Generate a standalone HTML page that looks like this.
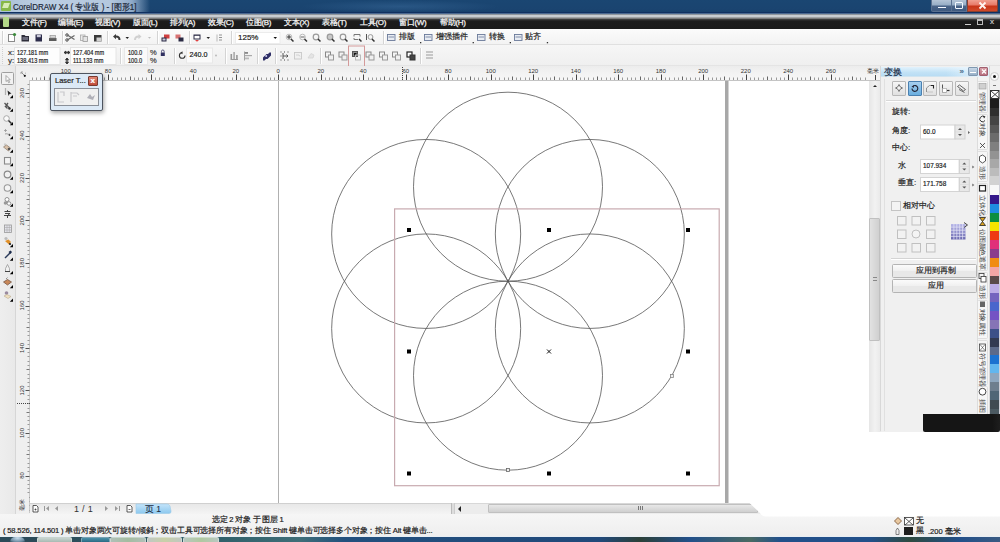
<!DOCTYPE html><html><head><meta charset="utf-8"><style>
*{margin:0;padding:0;box-sizing:border-box}
html,body{width:1000px;height:542px;overflow:hidden;background:#f0f0f0;font-family:"Liberation Sans",sans-serif;font-size:8px;color:#222}
div,span{position:absolute}
.t{white-space:nowrap;line-height:10px;-webkit-text-stroke:0.2px currentColor}
.mi{top:17.7px;color:#f4f4f4;font-size:8px;line-height:10px;white-space:nowrap;letter-spacing:-0.3px;-webkit-text-stroke:0.25px currentColor}
.sep{width:1px;background:#d4d4d4;box-shadow:1px 0 0 #fff}
.fld{background:#fff;border:1px solid #e2e2e2}
</style></head><body>
<div style="left:0;top:0;width:1000px;height:13px;background:linear-gradient(180deg,#1a4672,#1a4470 70%,#163e6a)"></div>
<div style="left:0;top:0;width:160px;height:13px;background:linear-gradient(90deg,#a9bfd6 0,#bccfe3 40px,#b4c8de 110px,#8faac8 132px,rgba(30,70,120,0) 150px)"></div>
<div style="left:300px;top:0;width:200px;height:13px;background:radial-gradient(ellipse at center,rgba(70,120,170,.35),rgba(0,0,0,0) 70%)"></div>
<div style="left:0;top:11.5px;width:1000px;height:2px;background:linear-gradient(180deg,#103060 0,#103060 .5px,#4a6890 1px,#4a6890 2px)"></div>
<div style="left:1px;top:1px;width:10px;height:10px;background:#86b848;border-radius:1px"></div>
<div style="left:3px;top:3px;width:6px;height:5px;background:#d8ecb8;transform:skewX(-20deg)"></div>
<div class="t" style="left:13px;top:1.6px;font-size:9px;color:#1c2838;transform:scaleX(.89);transform-origin:0 0">CorelDRAW X4 ( 专业版 ) - [图形1]</div>
<div style="left:931px;top:0;width:20.5px;height:11.5px;background:linear-gradient(180deg,#b4c4d6 0,#98aec6 45%,#4a6488 55%,#3e5a80 100%);border:1px solid #5a7090;border-top:none;border-radius:0 0 0 2px"></div>
<div style="left:951px;top:0;width:16px;height:11.5px;background:linear-gradient(180deg,#b4c4d6 0,#98aec6 45%,#4a6488 55%,#3e5a80 100%);border:1px solid #5a7090;border-top:none"></div>
<div style="left:967px;top:0;width:31px;height:11.5px;background:linear-gradient(180deg,#f0a090 0,#e87a68 45%,#c83418 55%,#d04a2a 100%);border:1px solid #8a4030;border-top:none;border-radius:0 0 2px 0"></div>
<div style="left:937.5px;top:6.5px;width:8px;height:1.8px;background:#f4f8ff"></div>
<div style="left:954.5px;top:2px;width:8px;height:7px;border:1.5px solid #f4f8ff;border-radius:1px"></div>
<svg style="position:absolute;left:967px;top:0" width="31" height="12"><path d="M12.5 2.5l6 6M18.5 2.5l-6 6" stroke="#fff4f0" stroke-width="1.8"/></svg>
<div style="left:0;top:13.5px;width:1000px;height:15.5px;background:linear-gradient(180deg,#303a48 0,#c8ccd0 .8px,#c8ccd0 2.5px,#7a7a7a 4.5px,#3a3a3a 5.5px,#1c1c1c 7px,#1a1a1a 14.5px,#000 15px,#000 15.5px)"></div>
<div style="left:3px;top:17px;width:6px;height:10px;background:#b4d888;border-radius:1px"></div>
<div class="mi" style="left:22px">文件(F)</div>
<div class="mi" style="left:58px">编辑(E)</div>
<div class="mi" style="left:95px">视图(V)</div>
<div class="mi" style="left:133px">版面(L)</div>
<div class="mi" style="left:170px">排列(A)</div>
<div class="mi" style="left:208px">效果(C)</div>
<div class="mi" style="left:246px">位图(B)</div>
<div class="mi" style="left:284px">文本(X)</div>
<div class="mi" style="left:322px">表格(T)</div>
<div class="mi" style="left:360px">工具(O)</div>
<div class="mi" style="left:399px">窗口(W)</div>
<div class="mi" style="left:440px">帮助(H)</div>
<div style="left:965px;top:24px;width:6px;height:1px;background:#ccc"></div>
<div style="left:977px;top:19px;width:6px;height:6px;border:1px solid #bbb;border-top-width:2px"></div>
<div class="t" style="left:990px;top:17px;color:#ccc;font-size:8px">x</div>
<div style="left:0;top:29px;width:1000px;height:16px;background:linear-gradient(180deg,#fbfbfb,#f3f3f3);border-bottom:1px solid #e0e0e0"></div>
<div style="left:0;top:45px;width:1000px;height:21px;background:linear-gradient(180deg,#f6f6f6,#efefef)"></div>
<div style="left:0;top:65px;width:1000px;height:1px;background:#e4e4e4"></div>
<div class="sep" style="left:2px;top:31px;height:13px"></div>
<div class="sep" style="left:61.5px;top:31px;height:13px"></div>
<div class="sep" style="left:107px;top:31px;height:13px"></div>
<div class="sep" style="left:156.5px;top:31px;height:13px"></div>
<div class="sep" style="left:189px;top:31px;height:13px"></div>
<div class="sep" style="left:231px;top:31px;height:13px"></div>
<div class="sep" style="left:382.5px;top:31px;height:13px"></div>
<svg style="position:absolute;left:0;top:0" width="1000" height="70" viewBox="0 0 1000 70"><rect x="8.5" y="34.5" width="6" height="7" fill="#fff" stroke="#8a8a8a"/><circle cx="14.5" cy="34.5" r="1.6" fill="#3a8a3a"/><path d="M21.5 35h3l1 1h3.5v5.5h-7.5z" fill="#2e2e3a"/><rect x="22.5" y="37" width="5.5" height="3" fill="#6a6a7a"/><rect x="35.5" y="34.5" width="6.5" height="7" fill="#2c2c4a"/><rect x="36.8" y="35" width="4" height="2.2" fill="#c8c8d8"/><rect x="49" y="38" width="7.5" height="3" fill="#5a5a5a"/><rect x="50" y="35.5" width="5.5" height="2.5" fill="#d8d8d8" stroke="#888" stroke-width=".6"/><path d="M66.5 34.5l8 5M66.5 40.5l8-5" stroke="#666" stroke-width="1.2"/><circle cx="67" cy="35" r="1.3" fill="none" stroke="#666"/><circle cx="67" cy="40" r="1.3" fill="none" stroke="#666"/><rect x="80.5" y="35" width="4.5" height="5.5" fill="#ececec" stroke="#aaa" stroke-width=".8"/><rect x="83" y="36.5" width="4.5" height="5" fill="#e4e4e4" stroke="#999" stroke-width=".8"/><rect x="94" y="35" width="7.5" height="6.5" fill="#3a3a3a"/><rect x="96.5" y="37.5" width="5" height="4" fill="#d0d0d0"/><path d="M113 36.5l3-2.5v1.6c3 0 4.5 1.8 4.5 4.4h-2c0-1.6-1-2.4-2.5-2.4v1.6z" fill="#3a3a3a"/><path d="M125.5 37h3.5l-1.75 2z" fill="#222"/><path d="M141.5 36.5l-3-2.5v1.6c-3 0-4.5 1.8-4.5 4.4h2c0-1.6 1-2.4 2.5-2.4v1.6z" fill="#d0d0d0"/><path d="M148 37h3l-1.5 1.8z" fill="#bbb"/><rect x="164" y="34.5" width="5.5" height="4" fill="#d04040"/><rect x="161.5" y="37.5" width="5" height="4" fill="#2a2a44"/><rect x="162.5" y="38.5" width="3" height="2" fill="#c8c8d8"/><rect x="175.5" y="34.5" width="5" height="4" fill="#d05050" opacity=".8"/><rect x="178.5" y="37.5" width="5" height="4" fill="#2a2a44"/><rect x="193.5" y="34.5" width="7" height="5" fill="#2a2a44"/><rect x="194.5" y="35.8" width="5" height="2.7" fill="#fff"/><path d="M195 40h4l-2 1.8z" fill="#e04040"/><path d="M206.5 37h3.5l-1.75 2z" fill="#222"/><path d="M217 34.5v7" stroke="#aaa" stroke-width=".8"/><path d="M219 35h3M219 37.5h3M219 40h3" stroke="#888" stroke-width=".9"/><rect x="235.5" y="32.5" width="44.5" height="11" fill="#fff" stroke="#ececec"/><path d="M273.5 37h3.5l-1.75 2z" fill="#111"/><circle cx="289" cy="37" r="2.8" fill="none" stroke="#bbb" stroke-width="1"/><path d="M287 37h4M289 35v4" stroke="#333" stroke-width="1"/><path d="M291 39l2.5 2.5" stroke="#333" stroke-width="1.5"/><circle cx="302.5" cy="37" r="2.8" fill="none" stroke="#bbb" stroke-width="1"/><path d="M300.5 37h4" stroke="#666" stroke-width="1"/><path d="M304.5 39l2.5 2.5" stroke="#333" stroke-width="1.5"/><circle cx="316" cy="37" r="2.8" fill="none" stroke="#9a9a9a" stroke-width="1.2"/><path d="M318 39l2.5 2.5" stroke="#333" stroke-width="1.5"/><circle cx="330" cy="37" r="2.8" fill="#c8c8c8" stroke="#9a9a9a" stroke-width="1.2"/><path d="M332 39l2.5 2.5" stroke="#333" stroke-width="1.5"/><circle cx="343" cy="37" r="2.8" fill="none" stroke="#9a9a9a" stroke-width="1.2"/><path d="M345 39l2.5 2.5" stroke="#333" stroke-width="1.5"/><path d="M354 34.5v2M354 34.5h6v2M354 39.5v-1.5M354 39.5h4" stroke="#777" stroke-width="1" fill="none"/><path d="M359 39l2.5 2.5" stroke="#333" stroke-width="1.5"/><path d="M366.5 34v6" stroke="#555" stroke-width="1"/><circle cx="370.5" cy="37" r="2.4" fill="none" stroke="#999" stroke-width="1"/><path d="M372 39l2.5 2.5" stroke="#333" stroke-width="1.5"/><rect x="387.5" y="34.5" width="7.5" height="6" fill="#e8ecf2" stroke="#6a7a9a" stroke-width=".9"/><path d="M388.5 37h5.5" stroke="#6a7a9a" stroke-width=".8"/><rect x="424.5" y="34.5" width="7.5" height="6" fill="#e8ecf2" stroke="#6a7a9a" stroke-width=".9"/><path d="M425.5 37h5.5" stroke="#6a7a9a" stroke-width=".8"/><rect x="477.5" y="34.5" width="7.5" height="6" fill="#e8ecf2" stroke="#6a7a9a" stroke-width=".9"/><path d="M478.5 37h5.5" stroke="#6a7a9a" stroke-width=".8"/><rect x="514.5" y="34.5" width="7.5" height="6" fill="#e8ecf2" stroke="#6a7a9a" stroke-width=".9"/><path d="M515.5 37h5.5" stroke="#6a7a9a" stroke-width=".8"/><rect x="420.0" y="42" width="1.3" height="1.3" fill="#333"/><rect x="472.59999999999997" y="42" width="1.3" height="1.3" fill="#333"/><rect x="509.7" y="42" width="1.3" height="1.3" fill="#333"/><rect x="546.8" y="42" width="1.3" height="1.3" fill="#333"/><path d="M2.5 47v17" stroke="#d0d0d0" stroke-dasharray="1 1"/><rect x="14.5" y="47.5" width="45.5" height="17" fill="#fdfdfd" stroke="#e4e4e4"/><rect x="70.5" y="47.5" width="45.5" height="17" fill="#fdfdfd" stroke="#e4e4e4"/><rect x="124.5" y="47.5" width="23" height="17" fill="#fafafa" stroke="#e8e8e8"/><rect x="186.5" y="48" width="26" height="15" fill="#fafafa" stroke="#e8e8e8"/><path d="M64 52.5h6M64 52.5l2-1.5v3zM70 52.5l-2-1.5v3z" stroke="#333" stroke-width=".9" fill="#333"/><path d="M67 58v6M67 58l-1.5 2h3zM67 64l-1.5-2h3z" stroke="#333" stroke-width=".9" fill="#333"/><rect x="160.8" y="52.5" width="4" height="3.5" fill="#303060"/><path d="M161.5 52.5v-1.2a1.3 1.3 0 0 1 2.6 0v1.2" stroke="#303060" fill="none" stroke-width=".8"/><path d="M185 55.5a2.8 2.8 0 1 1-2.8-2.8" fill="none" stroke="#333" stroke-width="1.1"/><path d="M180.5 52.7l2-1.5v3z" fill="#333"/><circle cx="216" cy="55.5" r="1" fill="#bbb"/><path d="M230.5 59.5h7.5" stroke="#999" stroke-width="1"/><rect x="230.5" y="54" width="1.6" height="5" fill="#999"/><rect x="233.3" y="52" width="1.6" height="7" fill="#aaa"/><rect x="236.1" y="55" width="1.6" height="4" fill="#999"/><path d="M244.5 51.5v9" stroke="#999" stroke-width=".9"/><rect x="245" y="52" width="3" height="1.8" fill="#888"/><rect x="245" y="55" width="7" height="1.2" fill="#aaa"/><rect x="245" y="57.5" width="4" height="1.8" fill="#bbb"/><path d="M263 57.5l3.5-3.5h1.5l1.5-1.5h1.5v3l-3.5 3.5h-1.5l-1.5 1.5h-1.5z" fill="#2e2e66"/><circle cx="266.2" cy="56" r="1" fill="#d0d0f0"/><path d="M280.5 52h1M280.5 56h1M280.5 60h1M284 52h1M284 60h1M287.5 52h1M287.5 60h1" stroke="#444" stroke-width="1.2"/><path d="M283 53v6M283 56h5l-1.5-1.5M288 56l-1.5 1.5" stroke="#555" stroke-width="1" fill="none"/><rect x="294.5" y="52.5" width="7" height="6.5" fill="#f0f0f0" stroke="#c8c8c8" stroke-width=".9"/><path d="M296 55h3l1 1.5" stroke="#ccc" stroke-width=".8" fill="none"/><path d="M308 58l3-4.5 3 1.5-1 3z" fill="#e4e4e4" stroke="#d4d4d4" stroke-width=".8"/><rect x="325.5" y="52" width="5" height="5" fill="#f4f4f4" stroke="#888"/><rect x="328.5" y="55" width="5" height="5" fill="#f0f0f0" stroke="#999"/><rect x="339" y="52" width="5" height="5" fill="#f4f4f4" stroke="#888"/><rect x="342" y="55" width="5" height="5" fill="#f0f0f0" stroke="#999"/><rect x="352.5" y="51.5" width="5" height="5" fill="#888" stroke="#555"/><rect x="354.0" y="53" width="2.5" height="2.5" fill="#111"/><rect x="355.5" y="55" width="5" height="5" fill="none" stroke="#bbb"/><rect x="366" y="52" width="5" height="5" fill="#f4f4f4" stroke="#888"/><rect x="369" y="55" width="5" height="5" fill="#f0f0f0" stroke="#999"/><rect x="379.5" y="52" width="5" height="5" fill="#f4f4f4" stroke="#888"/><rect x="382.5" y="55" width="5" height="5" fill="#f0f0f0" stroke="#999"/><rect x="392.5" y="52" width="5" height="5" fill="#f4f4f4" stroke="#888"/><rect x="395.5" y="55" width="5" height="5" fill="#f0f0f0" stroke="#999"/><rect x="407" y="52" width="5" height="5" fill="#fff" stroke="#222" stroke-width="1.2"/><rect x="410" y="55" width="5" height="5" fill="#444" stroke="#333"/><rect x="348.5" y="46" width="16" height="21" fill="none" stroke="#d49a9a" stroke-width="1"/><path d="M426 52h7M426 55h7M426 58h7" stroke="#999" stroke-width="1.2"/></svg>
<div class="sep" style="left:119.8px;top:48px;height:16px"></div>
<div class="sep" style="left:174.4px;top:48px;height:16px"></div>
<div class="sep" style="left:225.4px;top:48px;height:16px"></div>
<div class="sep" style="left:256.6px;top:48px;height:16px"></div>
<div class="sep" style="left:275.2px;top:48px;height:16px"></div>
<div class="sep" style="left:320px;top:48px;height:16px"></div>
<div class="sep" style="left:420px;top:48px;height:16px"></div>
<div class="t" style="left:238px;top:32.5px;font-size:8px;color:#222">125%</div>
<div class="t" style="left:399px;top:32px;font-size:7.6px;color:#222">排版</div>
<div class="t" style="left:435.5px;top:32px;font-size:7.6px;color:#222">增强插件</div>
<div class="t" style="left:488.5px;top:32px;font-size:7.6px;color:#222">转换</div>
<div class="t" style="left:525px;top:32px;font-size:7.6px;color:#222">贴齐</div>
<div class="t" style="left:8px;top:47.5px;font-size:8px;color:#333">x:</div>
<div class="t" style="left:8px;top:55.5px;font-size:8px;color:#333">y:</div>
<div class="t" style="left:17px;top:47.6px;font-size:7px;color:#222;transform:scaleX(0.8);transform-origin:0 0">127.181 mm</div>
<div class="t" style="left:17px;top:55.8px;font-size:7px;color:#222;transform:scaleX(0.8);transform-origin:0 0">138.413 mm</div>
<div class="t" style="left:73px;top:47.6px;font-size:7px;color:#222;transform:scaleX(0.8);transform-origin:0 0">127.404 mm</div>
<div class="t" style="left:73px;top:55.8px;font-size:7px;color:#222;transform:scaleX(0.8);transform-origin:0 0">111.133 mm</div>
<div class="t" style="left:127.6px;top:47.6px;font-size:7px;color:#222;transform:scaleX(0.8);transform-origin:0 0">100.0</div>
<div class="t" style="left:127.6px;top:55.8px;font-size:7px;color:#222;transform:scaleX(0.8);transform-origin:0 0">100.0</div>
<div class="t" style="left:150px;top:47.5px;font-size:7.5px;color:#444">%</div>
<div class="t" style="left:150px;top:55.5px;font-size:7.5px;color:#444">%</div>
<div class="t" style="left:189.4px;top:50.4px;font-size:7.2px;color:#222">240.0</div>
<div style="left:0;top:66px;width:16px;height:448px;background:linear-gradient(90deg,#eeeeee,#e9e9e9);border-right:1px solid #d6d6d6"></div>
<div style="left:16px;top:66px;width:865px;height:15px;background:linear-gradient(180deg,#ececec,#f2f2f2 45%,#f6f6f6);border-bottom:1px solid #c4c4c4"></div>
<div style="left:16px;top:66px;width:14px;height:447px;background:#efefef"></div><div style="left:29px;top:80px;width:1px;height:433px;background:#c8c8c8"></div>
<div style="left:30px;top:81px;width:839px;height:422px;background:#fff"></div>
<div style="left:869px;top:81px;width:12px;height:422px;background:linear-gradient(90deg,#e6e6e6,#f2f2f2 50%,#e8e8e8)"></div>
<div style="left:869px;top:218px;width:11px;height:123px;background:linear-gradient(90deg,#e2e2e2,#d0d0d0);border:1px solid #c0c0c0;border-radius:1px"></div>
<div style="left:873px;top:277px;width:4px;height:4px;border-top:1px solid #888;border-bottom:1px solid #888"></div>
<div style="left:872.5px;top:85px;width:0;height:0;border-left:2.5px solid transparent;border-right:2.5px solid transparent;border-bottom:2.5px solid #222"></div>
<svg style="position:absolute;left:0;top:0" width="1000" height="542" viewBox="0 0 1000 542"><path d="M32.5 77.5v2.5" stroke="#9a9a9a" stroke-width="1"/><path d="M36.5 77.5v2.5" stroke="#9a9a9a" stroke-width="1"/><path d="M40.5 77.5v2.5" stroke="#9a9a9a" stroke-width="1"/><path d="M44.5 76.5v3.5" stroke="#666" stroke-width="1"/><path d="M49.5 77.5v2.5" stroke="#9a9a9a" stroke-width="1"/><path d="M53.5 77.5v2.5" stroke="#9a9a9a" stroke-width="1"/><path d="M57.5 77.5v2.5" stroke="#9a9a9a" stroke-width="1"/><path d="M62.5 77.5v2.5" stroke="#9a9a9a" stroke-width="1"/><path d="M66.5 74.5v5.5" stroke="#444" stroke-width="1"/><path d="M70.5 77.5v2.5" stroke="#9a9a9a" stroke-width="1"/><path d="M74.5 77.5v2.5" stroke="#9a9a9a" stroke-width="1"/><path d="M78.5 77.5v2.5" stroke="#9a9a9a" stroke-width="1"/><path d="M83.5 77.5v2.5" stroke="#9a9a9a" stroke-width="1"/><path d="M87.5 76.5v3.5" stroke="#666" stroke-width="1"/><path d="M91.5 77.5v2.5" stroke="#9a9a9a" stroke-width="1"/><path d="M96.5 77.5v2.5" stroke="#9a9a9a" stroke-width="1"/><path d="M100.5 77.5v2.5" stroke="#9a9a9a" stroke-width="1"/><path d="M104.5 77.5v2.5" stroke="#9a9a9a" stroke-width="1"/><path d="M108.5 74.5v5.5" stroke="#444" stroke-width="1"/><path d="M112.5 77.5v2.5" stroke="#9a9a9a" stroke-width="1"/><path d="M117.5 77.5v2.5" stroke="#9a9a9a" stroke-width="1"/><path d="M121.5 77.5v2.5" stroke="#9a9a9a" stroke-width="1"/><path d="M125.5 77.5v2.5" stroke="#9a9a9a" stroke-width="1"/><path d="M130.5 76.5v3.5" stroke="#666" stroke-width="1"/><path d="M134.5 77.5v2.5" stroke="#9a9a9a" stroke-width="1"/><path d="M138.5 77.5v2.5" stroke="#9a9a9a" stroke-width="1"/><path d="M142.5 77.5v2.5" stroke="#9a9a9a" stroke-width="1"/><path d="M146.5 77.5v2.5" stroke="#9a9a9a" stroke-width="1"/><path d="M151.5 74.5v5.5" stroke="#444" stroke-width="1"/><path d="M155.5 77.5v2.5" stroke="#9a9a9a" stroke-width="1"/><path d="M159.5 77.5v2.5" stroke="#9a9a9a" stroke-width="1"/><path d="M164.5 77.5v2.5" stroke="#9a9a9a" stroke-width="1"/><path d="M168.5 77.5v2.5" stroke="#9a9a9a" stroke-width="1"/><path d="M172.5 76.5v3.5" stroke="#666" stroke-width="1"/><path d="M176.5 77.5v2.5" stroke="#9a9a9a" stroke-width="1"/><path d="M180.5 77.5v2.5" stroke="#9a9a9a" stroke-width="1"/><path d="M185.5 77.5v2.5" stroke="#9a9a9a" stroke-width="1"/><path d="M189.5 77.5v2.5" stroke="#9a9a9a" stroke-width="1"/><path d="M193.5 74.5v5.5" stroke="#444" stroke-width="1"/><path d="M198.5 77.5v2.5" stroke="#9a9a9a" stroke-width="1"/><path d="M202.5 77.5v2.5" stroke="#9a9a9a" stroke-width="1"/><path d="M206.5 77.5v2.5" stroke="#9a9a9a" stroke-width="1"/><path d="M210.5 77.5v2.5" stroke="#9a9a9a" stroke-width="1"/><path d="M214.5 76.5v3.5" stroke="#666" stroke-width="1"/><path d="M219.5 77.5v2.5" stroke="#9a9a9a" stroke-width="1"/><path d="M223.5 77.5v2.5" stroke="#9a9a9a" stroke-width="1"/><path d="M227.5 77.5v2.5" stroke="#9a9a9a" stroke-width="1"/><path d="M232.5 77.5v2.5" stroke="#9a9a9a" stroke-width="1"/><path d="M236.5 74.5v5.5" stroke="#444" stroke-width="1"/><path d="M240.5 77.5v2.5" stroke="#9a9a9a" stroke-width="1"/><path d="M244.5 77.5v2.5" stroke="#9a9a9a" stroke-width="1"/><path d="M248.5 77.5v2.5" stroke="#9a9a9a" stroke-width="1"/><path d="M253.5 77.5v2.5" stroke="#9a9a9a" stroke-width="1"/><path d="M257.5 76.5v3.5" stroke="#666" stroke-width="1"/><path d="M261.5 77.5v2.5" stroke="#9a9a9a" stroke-width="1"/><path d="M266.5 77.5v2.5" stroke="#9a9a9a" stroke-width="1"/><path d="M270.5 77.5v2.5" stroke="#9a9a9a" stroke-width="1"/><path d="M274.5 77.5v2.5" stroke="#9a9a9a" stroke-width="1"/><path d="M278.5 74.5v5.5" stroke="#444" stroke-width="1"/><path d="M282.5 77.5v2.5" stroke="#9a9a9a" stroke-width="1"/><path d="M287.5 77.5v2.5" stroke="#9a9a9a" stroke-width="1"/><path d="M291.5 77.5v2.5" stroke="#9a9a9a" stroke-width="1"/><path d="M295.5 77.5v2.5" stroke="#9a9a9a" stroke-width="1"/><path d="M300.5 76.5v3.5" stroke="#666" stroke-width="1"/><path d="M304.5 77.5v2.5" stroke="#9a9a9a" stroke-width="1"/><path d="M308.5 77.5v2.5" stroke="#9a9a9a" stroke-width="1"/><path d="M312.5 77.5v2.5" stroke="#9a9a9a" stroke-width="1"/><path d="M316.5 77.5v2.5" stroke="#9a9a9a" stroke-width="1"/><path d="M321.5 74.5v5.5" stroke="#444" stroke-width="1"/><path d="M325.5 77.5v2.5" stroke="#9a9a9a" stroke-width="1"/><path d="M329.5 77.5v2.5" stroke="#9a9a9a" stroke-width="1"/><path d="M334.5 77.5v2.5" stroke="#9a9a9a" stroke-width="1"/><path d="M338.5 77.5v2.5" stroke="#9a9a9a" stroke-width="1"/><path d="M342.5 76.5v3.5" stroke="#666" stroke-width="1"/><path d="M346.5 77.5v2.5" stroke="#9a9a9a" stroke-width="1"/><path d="M350.5 77.5v2.5" stroke="#9a9a9a" stroke-width="1"/><path d="M355.5 77.5v2.5" stroke="#9a9a9a" stroke-width="1"/><path d="M359.5 77.5v2.5" stroke="#9a9a9a" stroke-width="1"/><path d="M363.5 74.5v5.5" stroke="#444" stroke-width="1"/><path d="M368.5 77.5v2.5" stroke="#9a9a9a" stroke-width="1"/><path d="M372.5 77.5v2.5" stroke="#9a9a9a" stroke-width="1"/><path d="M376.5 77.5v2.5" stroke="#9a9a9a" stroke-width="1"/><path d="M380.5 77.5v2.5" stroke="#9a9a9a" stroke-width="1"/><path d="M384.5 76.5v3.5" stroke="#666" stroke-width="1"/><path d="M389.5 77.5v2.5" stroke="#9a9a9a" stroke-width="1"/><path d="M393.5 77.5v2.5" stroke="#9a9a9a" stroke-width="1"/><path d="M397.5 77.5v2.5" stroke="#9a9a9a" stroke-width="1"/><path d="M402.5 77.5v2.5" stroke="#9a9a9a" stroke-width="1"/><path d="M406.5 74.5v5.5" stroke="#444" stroke-width="1"/><path d="M410.5 77.5v2.5" stroke="#9a9a9a" stroke-width="1"/><path d="M414.5 77.5v2.5" stroke="#9a9a9a" stroke-width="1"/><path d="M418.5 77.5v2.5" stroke="#9a9a9a" stroke-width="1"/><path d="M423.5 77.5v2.5" stroke="#9a9a9a" stroke-width="1"/><path d="M427.5 76.5v3.5" stroke="#666" stroke-width="1"/><path d="M431.5 77.5v2.5" stroke="#9a9a9a" stroke-width="1"/><path d="M436.5 77.5v2.5" stroke="#9a9a9a" stroke-width="1"/><path d="M440.5 77.5v2.5" stroke="#9a9a9a" stroke-width="1"/><path d="M444.5 77.5v2.5" stroke="#9a9a9a" stroke-width="1"/><path d="M448.5 74.5v5.5" stroke="#444" stroke-width="1"/><path d="M452.5 77.5v2.5" stroke="#9a9a9a" stroke-width="1"/><path d="M457.5 77.5v2.5" stroke="#9a9a9a" stroke-width="1"/><path d="M461.5 77.5v2.5" stroke="#9a9a9a" stroke-width="1"/><path d="M465.5 77.5v2.5" stroke="#9a9a9a" stroke-width="1"/><path d="M470.5 76.5v3.5" stroke="#666" stroke-width="1"/><path d="M474.5 77.5v2.5" stroke="#9a9a9a" stroke-width="1"/><path d="M478.5 77.5v2.5" stroke="#9a9a9a" stroke-width="1"/><path d="M482.5 77.5v2.5" stroke="#9a9a9a" stroke-width="1"/><path d="M486.5 77.5v2.5" stroke="#9a9a9a" stroke-width="1"/><path d="M491.5 74.5v5.5" stroke="#444" stroke-width="1"/><path d="M495.5 77.5v2.5" stroke="#9a9a9a" stroke-width="1"/><path d="M499.5 77.5v2.5" stroke="#9a9a9a" stroke-width="1"/><path d="M504.5 77.5v2.5" stroke="#9a9a9a" stroke-width="1"/><path d="M508.5 77.5v2.5" stroke="#9a9a9a" stroke-width="1"/><path d="M512.5 76.5v3.5" stroke="#666" stroke-width="1"/><path d="M516.5 77.5v2.5" stroke="#9a9a9a" stroke-width="1"/><path d="M520.5 77.5v2.5" stroke="#9a9a9a" stroke-width="1"/><path d="M525.5 77.5v2.5" stroke="#9a9a9a" stroke-width="1"/><path d="M529.5 77.5v2.5" stroke="#9a9a9a" stroke-width="1"/><path d="M533.5 74.5v5.5" stroke="#444" stroke-width="1"/><path d="M538.5 77.5v2.5" stroke="#9a9a9a" stroke-width="1"/><path d="M542.5 77.5v2.5" stroke="#9a9a9a" stroke-width="1"/><path d="M546.5 77.5v2.5" stroke="#9a9a9a" stroke-width="1"/><path d="M550.5 77.5v2.5" stroke="#9a9a9a" stroke-width="1"/><path d="M554.5 76.5v3.5" stroke="#666" stroke-width="1"/><path d="M559.5 77.5v2.5" stroke="#9a9a9a" stroke-width="1"/><path d="M563.5 77.5v2.5" stroke="#9a9a9a" stroke-width="1"/><path d="M567.5 77.5v2.5" stroke="#9a9a9a" stroke-width="1"/><path d="M572.5 77.5v2.5" stroke="#9a9a9a" stroke-width="1"/><path d="M576.5 74.5v5.5" stroke="#444" stroke-width="1"/><path d="M580.5 77.5v2.5" stroke="#9a9a9a" stroke-width="1"/><path d="M584.5 77.5v2.5" stroke="#9a9a9a" stroke-width="1"/><path d="M588.5 77.5v2.5" stroke="#9a9a9a" stroke-width="1"/><path d="M593.5 77.5v2.5" stroke="#9a9a9a" stroke-width="1"/><path d="M597.5 76.5v3.5" stroke="#666" stroke-width="1"/><path d="M601.5 77.5v2.5" stroke="#9a9a9a" stroke-width="1"/><path d="M606.5 77.5v2.5" stroke="#9a9a9a" stroke-width="1"/><path d="M610.5 77.5v2.5" stroke="#9a9a9a" stroke-width="1"/><path d="M614.5 77.5v2.5" stroke="#9a9a9a" stroke-width="1"/><path d="M618.5 74.5v5.5" stroke="#444" stroke-width="1"/><path d="M622.5 77.5v2.5" stroke="#9a9a9a" stroke-width="1"/><path d="M627.5 77.5v2.5" stroke="#9a9a9a" stroke-width="1"/><path d="M631.5 77.5v2.5" stroke="#9a9a9a" stroke-width="1"/><path d="M635.5 77.5v2.5" stroke="#9a9a9a" stroke-width="1"/><path d="M640.5 76.5v3.5" stroke="#666" stroke-width="1"/><path d="M644.5 77.5v2.5" stroke="#9a9a9a" stroke-width="1"/><path d="M648.5 77.5v2.5" stroke="#9a9a9a" stroke-width="1"/><path d="M652.5 77.5v2.5" stroke="#9a9a9a" stroke-width="1"/><path d="M656.5 77.5v2.5" stroke="#9a9a9a" stroke-width="1"/><path d="M661.5 74.5v5.5" stroke="#444" stroke-width="1"/><path d="M665.5 77.5v2.5" stroke="#9a9a9a" stroke-width="1"/><path d="M669.5 77.5v2.5" stroke="#9a9a9a" stroke-width="1"/><path d="M674.5 77.5v2.5" stroke="#9a9a9a" stroke-width="1"/><path d="M678.5 77.5v2.5" stroke="#9a9a9a" stroke-width="1"/><path d="M682.5 76.5v3.5" stroke="#666" stroke-width="1"/><path d="M686.5 77.5v2.5" stroke="#9a9a9a" stroke-width="1"/><path d="M690.5 77.5v2.5" stroke="#9a9a9a" stroke-width="1"/><path d="M695.5 77.5v2.5" stroke="#9a9a9a" stroke-width="1"/><path d="M699.5 77.5v2.5" stroke="#9a9a9a" stroke-width="1"/><path d="M703.5 74.5v5.5" stroke="#444" stroke-width="1"/><path d="M708.5 77.5v2.5" stroke="#9a9a9a" stroke-width="1"/><path d="M712.5 77.5v2.5" stroke="#9a9a9a" stroke-width="1"/><path d="M716.5 77.5v2.5" stroke="#9a9a9a" stroke-width="1"/><path d="M720.5 77.5v2.5" stroke="#9a9a9a" stroke-width="1"/><path d="M724.5 76.5v3.5" stroke="#666" stroke-width="1"/><path d="M729.5 77.5v2.5" stroke="#9a9a9a" stroke-width="1"/><path d="M733.5 77.5v2.5" stroke="#9a9a9a" stroke-width="1"/><path d="M737.5 77.5v2.5" stroke="#9a9a9a" stroke-width="1"/><path d="M742.5 77.5v2.5" stroke="#9a9a9a" stroke-width="1"/><path d="M746.5 74.5v5.5" stroke="#444" stroke-width="1"/><path d="M750.5 77.5v2.5" stroke="#9a9a9a" stroke-width="1"/><path d="M754.5 77.5v2.5" stroke="#9a9a9a" stroke-width="1"/><path d="M758.5 77.5v2.5" stroke="#9a9a9a" stroke-width="1"/><path d="M763.5 77.5v2.5" stroke="#9a9a9a" stroke-width="1"/><path d="M767.5 76.5v3.5" stroke="#666" stroke-width="1"/><path d="M771.5 77.5v2.5" stroke="#9a9a9a" stroke-width="1"/><path d="M776.5 77.5v2.5" stroke="#9a9a9a" stroke-width="1"/><path d="M780.5 77.5v2.5" stroke="#9a9a9a" stroke-width="1"/><path d="M784.5 77.5v2.5" stroke="#9a9a9a" stroke-width="1"/><path d="M788.5 74.5v5.5" stroke="#444" stroke-width="1"/><path d="M792.5 77.5v2.5" stroke="#9a9a9a" stroke-width="1"/><path d="M797.5 77.5v2.5" stroke="#9a9a9a" stroke-width="1"/><path d="M801.5 77.5v2.5" stroke="#9a9a9a" stroke-width="1"/><path d="M805.5 77.5v2.5" stroke="#9a9a9a" stroke-width="1"/><path d="M810.5 76.5v3.5" stroke="#666" stroke-width="1"/><path d="M814.5 77.5v2.5" stroke="#9a9a9a" stroke-width="1"/><path d="M818.5 77.5v2.5" stroke="#9a9a9a" stroke-width="1"/><path d="M822.5 77.5v2.5" stroke="#9a9a9a" stroke-width="1"/><path d="M826.5 77.5v2.5" stroke="#9a9a9a" stroke-width="1"/><path d="M831.5 74.5v5.5" stroke="#444" stroke-width="1"/><path d="M835.5 77.5v2.5" stroke="#9a9a9a" stroke-width="1"/><path d="M839.5 77.5v2.5" stroke="#9a9a9a" stroke-width="1"/><path d="M844.5 77.5v2.5" stroke="#9a9a9a" stroke-width="1"/><path d="M848.5 77.5v2.5" stroke="#9a9a9a" stroke-width="1"/><path d="M852.5 76.5v3.5" stroke="#666" stroke-width="1"/><path d="M856.5 77.5v2.5" stroke="#9a9a9a" stroke-width="1"/><path d="M860.5 77.5v2.5" stroke="#9a9a9a" stroke-width="1"/><path d="M865.5 77.5v2.5" stroke="#9a9a9a" stroke-width="1"/><text x="65.8" y="73" font-size="6" text-anchor="middle" fill="#333" font-family="Liberation Sans">100</text><text x="108.2" y="73" font-size="6" text-anchor="middle" fill="#333" font-family="Liberation Sans">80</text><text x="150.8" y="73" font-size="6" text-anchor="middle" fill="#333" font-family="Liberation Sans">60</text><text x="193.2" y="73" font-size="6" text-anchor="middle" fill="#333" font-family="Liberation Sans">40</text><text x="235.8" y="73" font-size="6" text-anchor="middle" fill="#333" font-family="Liberation Sans">20</text><text x="278.2" y="73" font-size="6" text-anchor="middle" fill="#333" font-family="Liberation Sans">0</text><text x="320.8" y="73" font-size="6" text-anchor="middle" fill="#333" font-family="Liberation Sans">20</text><text x="363.2" y="73" font-size="6" text-anchor="middle" fill="#333" font-family="Liberation Sans">40</text><text x="405.8" y="73" font-size="6" text-anchor="middle" fill="#333" font-family="Liberation Sans">60</text><text x="448.2" y="73" font-size="6" text-anchor="middle" fill="#333" font-family="Liberation Sans">80</text><text x="490.8" y="73" font-size="6" text-anchor="middle" fill="#333" font-family="Liberation Sans">100</text><text x="533.2" y="73" font-size="6" text-anchor="middle" fill="#333" font-family="Liberation Sans">120</text><text x="575.8" y="73" font-size="6" text-anchor="middle" fill="#333" font-family="Liberation Sans">140</text><text x="618.2" y="73" font-size="6" text-anchor="middle" fill="#333" font-family="Liberation Sans">160</text><text x="660.8" y="73" font-size="6" text-anchor="middle" fill="#333" font-family="Liberation Sans">180</text><text x="703.2" y="73" font-size="6" text-anchor="middle" fill="#333" font-family="Liberation Sans">200</text><text x="745.8" y="73" font-size="6" text-anchor="middle" fill="#333" font-family="Liberation Sans">220</text><text x="788.2" y="73" font-size="6" text-anchor="middle" fill="#333" font-family="Liberation Sans">240</text><text x="830.8" y="73" font-size="6" text-anchor="middle" fill="#333" font-family="Liberation Sans">260</text><text x="873" y="73" font-size="5.5" text-anchor="middle" fill="#333" font-family="Liberation Sans">毫米</text><path d="M875.5 75v5" stroke="#444"/><path d="M402.5 67v13" stroke="#444" stroke-width="1" stroke-dasharray="1 1"/><path d="M27.5 510.5h2" stroke="#9a9a9a" stroke-width="1"/><path d="M27.5 505.5h2" stroke="#9a9a9a" stroke-width="1"/><path d="M27.5 501.5h2" stroke="#9a9a9a" stroke-width="1"/><path d="M26.5 497.5h3" stroke="#777" stroke-width="1"/><path d="M27.5 492.5h2" stroke="#9a9a9a" stroke-width="1"/><path d="M27.5 488.5h2" stroke="#9a9a9a" stroke-width="1"/><path d="M27.5 484.5h2" stroke="#9a9a9a" stroke-width="1"/><path d="M27.5 480.5h2" stroke="#9a9a9a" stroke-width="1"/><path d="M25.5 476.5h4" stroke="#555" stroke-width="1"/><path d="M27.5 471.5h2" stroke="#9a9a9a" stroke-width="1"/><path d="M27.5 467.5h2" stroke="#9a9a9a" stroke-width="1"/><path d="M27.5 463.5h2" stroke="#9a9a9a" stroke-width="1"/><path d="M27.5 458.5h2" stroke="#9a9a9a" stroke-width="1"/><path d="M26.5 454.5h3" stroke="#777" stroke-width="1"/><path d="M27.5 450.5h2" stroke="#9a9a9a" stroke-width="1"/><path d="M27.5 446.5h2" stroke="#9a9a9a" stroke-width="1"/><path d="M27.5 442.5h2" stroke="#9a9a9a" stroke-width="1"/><path d="M27.5 437.5h2" stroke="#9a9a9a" stroke-width="1"/><path d="M25.5 433.5h4" stroke="#555" stroke-width="1"/><path d="M27.5 429.5h2" stroke="#9a9a9a" stroke-width="1"/><path d="M27.5 424.5h2" stroke="#9a9a9a" stroke-width="1"/><path d="M27.5 420.5h2" stroke="#9a9a9a" stroke-width="1"/><path d="M27.5 416.5h2" stroke="#9a9a9a" stroke-width="1"/><path d="M26.5 412.5h3" stroke="#777" stroke-width="1"/><path d="M27.5 408.5h2" stroke="#9a9a9a" stroke-width="1"/><path d="M27.5 403.5h2" stroke="#9a9a9a" stroke-width="1"/><path d="M27.5 399.5h2" stroke="#9a9a9a" stroke-width="1"/><path d="M27.5 395.5h2" stroke="#9a9a9a" stroke-width="1"/><path d="M25.5 390.5h4" stroke="#555" stroke-width="1"/><path d="M27.5 386.5h2" stroke="#9a9a9a" stroke-width="1"/><path d="M27.5 382.5h2" stroke="#9a9a9a" stroke-width="1"/><path d="M27.5 378.5h2" stroke="#9a9a9a" stroke-width="1"/><path d="M27.5 374.5h2" stroke="#9a9a9a" stroke-width="1"/><path d="M26.5 369.5h3" stroke="#777" stroke-width="1"/><path d="M27.5 365.5h2" stroke="#9a9a9a" stroke-width="1"/><path d="M27.5 361.5h2" stroke="#9a9a9a" stroke-width="1"/><path d="M27.5 356.5h2" stroke="#9a9a9a" stroke-width="1"/><path d="M27.5 352.5h2" stroke="#9a9a9a" stroke-width="1"/><path d="M25.5 348.5h4" stroke="#555" stroke-width="1"/><path d="M27.5 344.5h2" stroke="#9a9a9a" stroke-width="1"/><path d="M27.5 340.5h2" stroke="#9a9a9a" stroke-width="1"/><path d="M27.5 335.5h2" stroke="#9a9a9a" stroke-width="1"/><path d="M27.5 331.5h2" stroke="#9a9a9a" stroke-width="1"/><path d="M26.5 327.5h3" stroke="#777" stroke-width="1"/><path d="M27.5 322.5h2" stroke="#9a9a9a" stroke-width="1"/><path d="M27.5 318.5h2" stroke="#9a9a9a" stroke-width="1"/><path d="M27.5 314.5h2" stroke="#9a9a9a" stroke-width="1"/><path d="M27.5 310.5h2" stroke="#9a9a9a" stroke-width="1"/><path d="M25.5 306.5h4" stroke="#555" stroke-width="1"/><path d="M27.5 301.5h2" stroke="#9a9a9a" stroke-width="1"/><path d="M27.5 297.5h2" stroke="#9a9a9a" stroke-width="1"/><path d="M27.5 293.5h2" stroke="#9a9a9a" stroke-width="1"/><path d="M27.5 288.5h2" stroke="#9a9a9a" stroke-width="1"/><path d="M26.5 284.5h3" stroke="#777" stroke-width="1"/><path d="M27.5 280.5h2" stroke="#9a9a9a" stroke-width="1"/><path d="M27.5 276.5h2" stroke="#9a9a9a" stroke-width="1"/><path d="M27.5 272.5h2" stroke="#9a9a9a" stroke-width="1"/><path d="M27.5 267.5h2" stroke="#9a9a9a" stroke-width="1"/><path d="M25.5 263.5h4" stroke="#555" stroke-width="1"/><path d="M27.5 259.5h2" stroke="#9a9a9a" stroke-width="1"/><path d="M27.5 254.5h2" stroke="#9a9a9a" stroke-width="1"/><path d="M27.5 250.5h2" stroke="#9a9a9a" stroke-width="1"/><path d="M27.5 246.5h2" stroke="#9a9a9a" stroke-width="1"/><path d="M26.5 242.5h3" stroke="#777" stroke-width="1"/><path d="M27.5 238.5h2" stroke="#9a9a9a" stroke-width="1"/><path d="M27.5 233.5h2" stroke="#9a9a9a" stroke-width="1"/><path d="M27.5 229.5h2" stroke="#9a9a9a" stroke-width="1"/><path d="M27.5 225.5h2" stroke="#9a9a9a" stroke-width="1"/><path d="M25.5 220.5h4" stroke="#555" stroke-width="1"/><path d="M27.5 216.5h2" stroke="#9a9a9a" stroke-width="1"/><path d="M27.5 212.5h2" stroke="#9a9a9a" stroke-width="1"/><path d="M27.5 208.5h2" stroke="#9a9a9a" stroke-width="1"/><path d="M27.5 204.5h2" stroke="#9a9a9a" stroke-width="1"/><path d="M26.5 199.5h3" stroke="#777" stroke-width="1"/><path d="M27.5 195.5h2" stroke="#9a9a9a" stroke-width="1"/><path d="M27.5 191.5h2" stroke="#9a9a9a" stroke-width="1"/><path d="M27.5 186.5h2" stroke="#9a9a9a" stroke-width="1"/><path d="M27.5 182.5h2" stroke="#9a9a9a" stroke-width="1"/><path d="M25.5 178.5h4" stroke="#555" stroke-width="1"/><path d="M27.5 174.5h2" stroke="#9a9a9a" stroke-width="1"/><path d="M27.5 170.5h2" stroke="#9a9a9a" stroke-width="1"/><path d="M27.5 165.5h2" stroke="#9a9a9a" stroke-width="1"/><path d="M27.5 161.5h2" stroke="#9a9a9a" stroke-width="1"/><path d="M26.5 157.5h3" stroke="#777" stroke-width="1"/><path d="M27.5 152.5h2" stroke="#9a9a9a" stroke-width="1"/><path d="M27.5 148.5h2" stroke="#9a9a9a" stroke-width="1"/><path d="M27.5 144.5h2" stroke="#9a9a9a" stroke-width="1"/><path d="M27.5 140.5h2" stroke="#9a9a9a" stroke-width="1"/><path d="M25.5 136.5h4" stroke="#555" stroke-width="1"/><path d="M27.5 131.5h2" stroke="#9a9a9a" stroke-width="1"/><path d="M27.5 127.5h2" stroke="#9a9a9a" stroke-width="1"/><path d="M27.5 123.5h2" stroke="#9a9a9a" stroke-width="1"/><path d="M27.5 118.5h2" stroke="#9a9a9a" stroke-width="1"/><path d="M26.5 114.5h3" stroke="#777" stroke-width="1"/><path d="M27.5 110.5h2" stroke="#9a9a9a" stroke-width="1"/><path d="M27.5 106.5h2" stroke="#9a9a9a" stroke-width="1"/><path d="M27.5 102.5h2" stroke="#9a9a9a" stroke-width="1"/><path d="M27.5 97.5h2" stroke="#9a9a9a" stroke-width="1"/><path d="M25.5 93.5h4" stroke="#555" stroke-width="1"/><path d="M27.5 89.5h2" stroke="#9a9a9a" stroke-width="1"/><path d="M27.5 84.5h2" stroke="#9a9a9a" stroke-width="1"/><text x="0" y="0" transform="translate(23.5 475.5) rotate(-90)" font-size="6" text-anchor="middle" fill="#333" font-family="Liberation Sans">80</text><text x="0" y="0" transform="translate(23.5 433.0) rotate(-90)" font-size="6" text-anchor="middle" fill="#333" font-family="Liberation Sans">100</text><text x="0" y="0" transform="translate(23.5 390.5) rotate(-90)" font-size="6" text-anchor="middle" fill="#333" font-family="Liberation Sans">120</text><text x="0" y="0" transform="translate(23.5 348.0) rotate(-90)" font-size="6" text-anchor="middle" fill="#333" font-family="Liberation Sans">140</text><text x="0" y="0" transform="translate(23.5 305.5) rotate(-90)" font-size="6" text-anchor="middle" fill="#333" font-family="Liberation Sans">160</text><text x="0" y="0" transform="translate(23.5 263.0) rotate(-90)" font-size="6" text-anchor="middle" fill="#333" font-family="Liberation Sans">180</text><text x="0" y="0" transform="translate(23.5 220.5) rotate(-90)" font-size="6" text-anchor="middle" fill="#333" font-family="Liberation Sans">200</text><text x="0" y="0" transform="translate(23.5 178.0) rotate(-90)" font-size="6" text-anchor="middle" fill="#333" font-family="Liberation Sans">220</text><text x="0" y="0" transform="translate(23.5 135.5) rotate(-90)" font-size="6" text-anchor="middle" fill="#333" font-family="Liberation Sans">240</text><text x="0" y="0" transform="translate(23.5 93.0) rotate(-90)" font-size="6" text-anchor="middle" fill="#333" font-family="Liberation Sans">260</text><path d="M17 403.5h13" stroke="#444" stroke-width="1" stroke-dasharray="1 1"/><rect x="17" y="497" width="12" height="16" fill="#efefef"/><text x="0" y="0" transform="translate(24 505) rotate(-90)" font-size="5.5" text-anchor="middle" fill="#333" font-family="Liberation Sans">毫米</text><path d="M21.5 72.5l3 3" stroke="#777" stroke-width=".8"/><path d="M21 72h2M21 72v2" stroke="#888" stroke-width=".7"/><circle cx="24.8" cy="75.8" r="1.1" fill="#111"/><path d="M25.5 72.5v1.5" stroke="#aaa" stroke-width=".6"/><circle cx="508.00" cy="186.70" r="94.5" fill="none" stroke="#555" stroke-width="0.8"/><circle cx="589.84" cy="233.95" r="94.5" fill="none" stroke="#555" stroke-width="0.8"/><circle cx="589.84" cy="328.45" r="94.5" fill="none" stroke="#555" stroke-width="0.8"/><circle cx="508.00" cy="375.70" r="94.5" fill="none" stroke="#555" stroke-width="0.8"/><circle cx="426.16" cy="328.45" r="94.5" fill="none" stroke="#555" stroke-width="0.8"/><circle cx="426.16" cy="233.95" r="94.5" fill="none" stroke="#555" stroke-width="0.8"/><rect x="394.6" y="208.9" width="324.6" height="276.8" fill="none" stroke="#c8aab0" stroke-width="1.2"/><path d="M278.5 81v422" stroke="#b0b0b0" stroke-width="1"/><rect x="725" y="81" width="3.5" height="422" fill="#a8a8a8"/><rect x="407" y="228" width="4" height="4" fill="#000"/><rect x="407" y="349.5" width="4" height="4" fill="#000"/><rect x="407" y="471.5" width="4" height="4" fill="#000"/><rect x="547" y="228" width="4" height="4" fill="#000"/><path d="M547 349.5l4 4M551 349.5l-4 4" stroke="#111" stroke-width="1"/><rect x="547" y="471.5" width="4" height="4" fill="#000"/><rect x="686" y="228" width="4" height="4" fill="#000"/><rect x="686" y="349.5" width="4" height="4" fill="#000"/><rect x="686" y="471.5" width="4" height="4" fill="#000"/><rect x="506.5" y="468.5" width="3" height="3" fill="#eee" stroke="#666" stroke-width=".8"/><rect x="670.5" y="374.5" width="3" height="3" fill="#eee" stroke="#888" stroke-width=".8"/></svg>
<svg style="position:absolute;left:0;top:0" width="20" height="320" viewBox="0 0 20 320"><rect x="1.5" y="72.5" width="12" height="12" fill="#f2f2f2" stroke="#a0a0a0" rx="1"/><path d="M6 75.5v6l1.4-1.3 1.3 2.6 1-.5-1.3-2.5h1.9z" fill="#fff" stroke="#8a8a8a" stroke-width=".7"/><path d="M5.5 88v7" stroke="#b0b0b0" stroke-width="1.2"/><path d="M7.5 90.5l4 3-2 .5-1 2z" fill="#222"/><path d="M13 95v3.2h-3.2z" fill="#000"/><path d="M4.5 103l5 5M8 103l-3 4M5 106l2.5 2.5" stroke="#555" stroke-width="1.3"/><circle cx="9.5" cy="108.5" r="1.3" fill="#333"/><path d="M13 108.5v3.2h-3.2z" fill="#000"/><circle cx="6.5" cy="118.5" r="2.8" fill="#fafafa" stroke="#a8a8a8" stroke-width="1"/><path d="M8.5 120.5l3 3" stroke="#333" stroke-width="1.5"/><path d="M13 122v3.2h-3.2z" fill="#000"/><path d="M4 130.5h3M5.5 129v3" stroke="#9a9a9a" stroke-width=".8"/><path d="M5 134c2-1 3 1 5 0" stroke="#9a9a9a" stroke-width="1" fill="none"/><circle cx="9.5" cy="135" r=".9" fill="#444"/><path d="M13 136v3.2h-3.2z" fill="#000"/><path d="M5 143.5v2" stroke="#999" stroke-width=".8"/><path d="M3.5 147l3-2 4 3-2 3z" fill="#d8c0a8" stroke="#8a7a6a" stroke-width=".7"/><circle cx="9" cy="149" r="1.3" fill="#555"/><path d="M13 149.5v3.2h-3.2z" fill="#000"/><rect x="4.5" y="157.5" width="6" height="6.5" fill="#f4f4f4" stroke="#8a8a8a" stroke-width="1.1"/><path d="M13 163v3.2h-3.2z" fill="#000"/><circle cx="7.5" cy="174.5" r="3.3" fill="#f0f0f0" stroke="#8a8a8a" stroke-width="1.2"/><path d="M13 176.5v3.2h-3.2z" fill="#000"/><circle cx="7.5" cy="188" r="3.3" fill="#f4f4f4" stroke="#999" stroke-width="1.1"/><path d="M13 190v3.2h-3.2z" fill="#000"/><circle cx="7" cy="199.5" r="2" fill="#fff" stroke="#888" stroke-width=".9"/><circle cx="5.5" cy="203" r="1.8" fill="#999"/><circle cx="9" cy="203.5" r="1.8" fill="#fff" stroke="#888" stroke-width=".9"/><path d="M13 203.5v3.2h-3.2z" fill="#000"/><path d="M4.5 211.5h6M7.5 210v1.5M5 213.5h5l-2 1.5M4 215.5h7M7.5 215v3" stroke="#333" stroke-width=".9" fill="none"/><rect x="4.5" y="225" width="7" height="7.5" fill="#e4e4ec" stroke="#999" stroke-width=".8"/><path d="M4.5 227.5h7M4.5 230h7M7 225v7.5M9.3 225v7.5" stroke="#aaa" stroke-width=".6"/><circle cx="6" cy="238.5" r="1.6" fill="#bbb"/><path d="M5 241l3.5-1.5 2.5 2.5-2 2.5z" fill="#e0902a"/><circle cx="10" cy="244" r="1.1" fill="#222"/><path d="M13 244v3.2h-3.2z" fill="#000"/><path d="M5 258l5-5" stroke="#2a3a5a" stroke-width="1.4"/><path d="M8.5 252l2-1.5 1.5 1.5-1.5 2z" fill="#1a2a4a"/><path d="M13 257.5v3.2h-3.2z" fill="#000"/><path d="M7.5 264.5l2 4v3h-4v-3z" fill="#f0f0f0" stroke="#999" stroke-width=".8"/><path d="M5 271.5h5" stroke="#444" stroke-width="1"/><path d="M13 271v3.2h-3.2z" fill="#000"/><path d="M3.5 282l4-2.5 4 2.5-4 3z" fill="#c8885a" stroke="#6a4a3a" stroke-width=".7"/><path d="M6 279l1.5-1.5" stroke="#777" stroke-width=".8"/><path d="M13 285v3.2h-3.2z" fill="#000"/><circle cx="6.5" cy="293" r="1.8" fill="#9a8aa0"/><path d="M4 296l3-1.5 4 2-3 2z" fill="#f0e0c0" stroke="#b0a080" stroke-width=".5"/><path d="M13 298.5v3.2h-3.2z" fill="#000"/></svg>
<div style="left:50px;top:73px;width:53px;height:38px;background:#dce9f6;border:1px solid #4e5560;border-radius:2px;box-shadow:1px 2px 4px rgba(0,0,0,.35)"></div>
<div class="t" style="left:55px;top:75.5px;font-size:7.5px;color:#222">Laser T...</div>
<div style="left:88px;top:76px;width:10px;height:10px;background:linear-gradient(180deg,#e08878,#c04a38);border:1px solid #7a3a30;border-radius:1px"></div>
<div class="t" style="left:90.5px;top:75.5px;font-size:8px;font-weight:bold;color:#fff">x</div>
<div style="left:54px;top:88px;width:45px;height:18px;background:#f0f0f0;border:1px solid #8a8f98"></div>
<svg style="position:absolute;left:54px;top:88px" width="45" height="18"><path d="M4 4v10h6M6 4h4v4M17 4v10M17 5h6l2 2M19 8h4" stroke="#c8c8cc" stroke-width="1.2" fill="none"/><path d="M33 10l3-4 2 3 3-2-2 5-3-1z" fill="#b0b0b8"/></svg>
<div style="left:880px;top:66px;width:97px;height:365px;background:#f0f0f0;border-left:1px solid #d8d8d8"></div>
<div style="left:884px;top:79px;width:1px;height:352px;background:#e0e0e0"></div>
<div style="left:892px;top:81px;width:14px;height:15px;background:linear-gradient(180deg,#f6f6f6,#e0e0e0);border:1px solid #b8b8b8;border-radius:1px"></div>
<div style="left:907.5px;top:81px;width:14px;height:15px;background:linear-gradient(180deg,#a8d0ef,#6aaedf);border:1px solid #4a80b0;border-radius:1px"></div>
<div style="left:923px;top:81px;width:14px;height:15px;background:linear-gradient(180deg,#f6f6f6,#e0e0e0);border:1px solid #b8b8b8;border-radius:1px"></div>
<div style="left:939px;top:81px;width:14px;height:15px;background:linear-gradient(180deg,#f6f6f6,#e0e0e0);border:1px solid #b8b8b8;border-radius:1px"></div>
<div style="left:955px;top:81px;width:14px;height:15px;background:linear-gradient(180deg,#f6f6f6,#e0e0e0);border:1px solid #b8b8b8;border-radius:1px"></div>
<svg style="position:absolute;left:0;top:0" width="1000" height="300" viewBox="0 0 1000 300"><path d="M899 84.5q.8 3 3.5 3.5q-2.7.5-3.5 3.5q-.8-3-3.5-3.5q2.7-.5 3.5-3.5z" fill="#f4f4f4" stroke="#666" stroke-width=".9"/><path d="M912 88.5a2.9 2.9 0 1 0 1.2-2.4" fill="none" stroke="#223" stroke-width="1.1"/><path d="M911.5 86.5l2.5-1.2-.3 2.6z" fill="#223"/><path d="M926.5 92v-4l3-2.5h4" fill="none" stroke="#888" stroke-width=".9"/><path d="M931 85.5h2.5v3" stroke="#222" stroke-width="1.1" fill="none"/><path d="M927 92h6" stroke="#bbb" stroke-width=".8"/><path d="M942.5 84.5v3.5M942.5 88v4h4" stroke="#555" stroke-width="1" fill="none"/><rect x="942.5" y="88.5" width="4" height="4" fill="#fff" stroke="#999" stroke-width=".6"/><path d="M947 90.5h2.5" stroke="#333" stroke-width="1.2"/><path d="M957.5 86.5l2-1.5 6 4.5-2 1.5z" fill="none" stroke="#555" stroke-width=".9"/><path d="M959 89.5l5.5 3" stroke="#666" stroke-width="1"/><path d="M886 100.5h90" stroke="#d8d8d8"/><path d="M886 101.5h90" stroke="#fff"/><path d="M891 258.5h85" stroke="#d4d4d4"/><path d="M891 259.5h85" stroke="#fff"/><rect x="920.5" y="125" width="34.5" height="14" fill="#fff" stroke="#d4d4d4"/><rect x="955.0" y="125" width="10" height="14" fill="#e8e8e8" stroke="#d0d0d0"/><path d="M958.0 130h4l-2-2z" fill="#555"/><path d="M958.0 134h4l-2 2z" fill="#555"/><path d="M955.0 132h10" stroke="#d8d8d8" stroke-width=".6"/><path d="M968.0 131l2 1.5-2 1.5z" fill="#666"/><rect x="920.5" y="159.5" width="38.8" height="14" fill="#fff" stroke="#d4d4d4"/><rect x="959.3" y="159.5" width="10" height="14" fill="#e8e8e8" stroke="#d0d0d0"/><path d="M962.3 164.5h4l-2-2z" fill="#555"/><path d="M962.3 168.5h4l-2 2z" fill="#555"/><path d="M959.3 166.5h10" stroke="#d8d8d8" stroke-width=".6"/><path d="M972.3 165.5l2 1.5-2 1.5z" fill="#666"/><rect x="920.5" y="177.5" width="38.8" height="14" fill="#fff" stroke="#d4d4d4"/><rect x="959.3" y="177.5" width="10" height="14" fill="#e8e8e8" stroke="#d0d0d0"/><path d="M962.3 182.5h4l-2-2z" fill="#555"/><path d="M962.3 186.5h4l-2 2z" fill="#555"/><path d="M959.3 184.5h10" stroke="#d8d8d8" stroke-width=".6"/><path d="M972.3 183.5l2 1.5-2 1.5z" fill="#666"/><rect x="891.5" y="201.5" width="9" height="9" fill="#f4f4f4" stroke="#c4c4c4"/><rect x="897.5" y="216.5" width="8.5" height="8.5" fill="#f2f2f2" stroke="#c0c0c0"/><rect x="897.5" y="230.0" width="8.5" height="8.5" fill="#f2f2f2" stroke="#c0c0c0"/><rect x="897.5" y="243.5" width="8.5" height="8.5" fill="#f2f2f2" stroke="#c0c0c0"/><rect x="912.0" y="216.5" width="8.5" height="8.5" fill="#f2f2f2" stroke="#c0c0c0"/><circle cx="916.0" cy="234.0" r="4" fill="#f4f4f4" stroke="#c0c0c0"/><rect x="912.0" y="243.5" width="8.5" height="8.5" fill="#f2f2f2" stroke="#c0c0c0"/><rect x="926.5" y="216.5" width="8.5" height="8.5" fill="#f2f2f2" stroke="#c0c0c0"/><rect x="926.5" y="230.0" width="8.5" height="8.5" fill="#f2f2f2" stroke="#c0c0c0"/><rect x="926.5" y="243.5" width="8.5" height="8.5" fill="#f2f2f2" stroke="#c0c0c0"/><defs><linearGradient id="pgr" x1="0" y1="0" x2="0" y2="1"><stop offset="0" stop-color="#b8b8e8"/><stop offset="1" stop-color="#6a68b0"/></linearGradient></defs><rect x="951" y="224" width="14.5" height="15.5" fill="url(#pgr)"/><path d="M953.9 224v15.5M951 227.1h14.5" stroke="#e8e8f8" stroke-width=".7"/><path d="M956.8 224v15.5M951 230.2h14.5" stroke="#e8e8f8" stroke-width=".7"/><path d="M959.7 224v15.5M951 233.3h14.5" stroke="#e8e8f8" stroke-width=".7"/><path d="M962.6 224v15.5M951 236.4h14.5" stroke="#e8e8f8" stroke-width=".7"/><path d="M964 222.5l3.5 2.5-3.5 2.5" fill="none" stroke="#444" stroke-width="1"/><rect x="892.5" y="264.5" width="84" height="13" fill="#e8e8e8" stroke="#b4b4b4" rx="1"/><rect x="892.5" y="279.5" width="84" height="13" fill="#e8e8e8" stroke="#b4b4b4" rx="1"/></svg>
<div style="left:893px;top:265px;width:83px;height:6px;background:linear-gradient(180deg,#fbfbfb,#f0f0f0)"></div>
<div style="left:893px;top:280px;width:83px;height:6px;background:linear-gradient(180deg,#fbfbfb,#f0f0f0)"></div>
<div class="t" style="left:892px;top:107px;font-size:8px;color:#222">旋转:</div>
<div class="t" style="left:892px;top:126px;font-size:8px;color:#222">角度:</div>
<div class="t" style="left:892px;top:143px;font-size:8px;color:#222">中心:</div>
<div class="t" style="left:898px;top:161px;font-size:8px;color:#222">水</div>
<div class="t" style="left:898px;top:178px;font-size:8px;color:#222">垂直:</div>
<div class="t" style="left:903px;top:200.5px;font-size:8px;color:#222">相对中心</div>
<div class="t" style="left:922.5px;top:126.5px;font-size:7.3px;color:#222;transform:scaleX(.88);transform-origin:0 0">60.0</div>
<div class="t" style="left:922.5px;top:161px;font-size:7.3px;color:#222;transform:scaleX(.88);transform-origin:0 0">107.934</div>
<div class="t" style="left:922.5px;top:179px;font-size:7.3px;color:#222;transform:scaleX(.88);transform-origin:0 0">171.758</div>
<div class="t" style="left:916px;top:266px;font-size:7.7px;color:#222">应用到再制</div>
<div class="t" style="left:927.5px;top:281px;font-size:7.7px;color:#222">应用</div>
<div style="left:977px;top:66px;width:12px;height:365px;background:#f3f3f3;border-left:1px solid #dcdcdc"></div>
<div style="left:881px;top:66.5px;width:108px;height:10px;background:linear-gradient(180deg,#e2f2fc,#c2e2f6 60%,#b8dcf4);border-bottom:1px solid #d0e4f0"></div>
<div style="left:881px;top:66.5px;width:108px;height:10px;background:linear-gradient(90deg,rgba(255,255,255,0) 60%,rgba(240,248,255,.7) 90%)"></div>
<div class="t" style="left:884px;top:67px;font-size:8.5px;color:#1a2a44;line-height:10px">变换</div>
<div class="t" style="left:959.5px;top:66.5px;font-size:8px;color:#5a7a98;line-height:10px;font-weight:bold">»</div>
<div style="left:968px;top:67px;width:9.5px;height:9px;background:linear-gradient(180deg,#c8d8e8,#98b0c8);border:1px solid #8098b0;border-radius:1px"></div>
<div style="left:970px;top:71.5px;width:5.5px;height:1.5px;background:#fff"></div>
<div style="left:978.5px;top:67px;width:9.5px;height:9px;background:linear-gradient(180deg,#d8a0a8,#b87080);border:1px solid #a06070;border-radius:1px"></div>
<svg style="position:absolute;left:978.5px;top:67px" width="10" height="9"><path d="M3 2.5l4 4M7 2.5l-4 4" stroke="#fff" stroke-width="1.3"/></svg>
<svg style="position:absolute;left:0;top:0" width="1000" height="542" viewBox="0 0 1000 542"><rect x="977.5" y="81.5" width="10" height="31" fill="#f6f6f6" stroke="#d8d8d8" stroke-width=".8" rx="1"/><rect x="977.5" y="114.5" width="10" height="35" fill="#f6f6f6" stroke="#d8d8d8" stroke-width=".8" rx="1"/><rect x="977.5" y="151.5" width="10" height="30" fill="#f6f6f6" stroke="#d8d8d8" stroke-width=".8" rx="1"/><rect x="977.5" y="183.5" width="10" height="31" fill="#f6f6f6" stroke="#d8d8d8" stroke-width=".8" rx="1"/><rect x="977.5" y="216.5" width="10" height="54" fill="#f6f6f6" stroke="#d8d8d8" stroke-width=".8" rx="1"/><rect x="977.5" y="272.5" width="10" height="26" fill="#f6f6f6" stroke="#d8d8d8" stroke-width=".8" rx="1"/><rect x="977.5" y="300.5" width="10" height="38" fill="#f6f6f6" stroke="#d8d8d8" stroke-width=".8" rx="1"/><rect x="977.5" y="340.5" width="10" height="44" fill="#f6f6f6" stroke="#d8d8d8" stroke-width=".8" rx="1"/><rect x="977.5" y="386.5" width="10" height="44" fill="#f6f6f6" stroke="#d8d8d8" stroke-width=".8" rx="1"/><rect x="979" y="83.5" width="7" height="5.5" fill="#d0d0d0" stroke="#9a9a9a" stroke-width=".6"/><path d="M984.5 117a2.8 2.8 0 1 0 .5 3.5" fill="none" stroke="#333" stroke-width="1"/><path d="M983 115.5l2.5 1-1.5 2z" fill="#333"/><path d="M980 143l5 5M985 143l-5 5" stroke="#333" stroke-width=".8"/><path d="M979.5 156.5l3-1.5 3 2v4l-3 2-3-2z" fill="#fff" stroke="#444" stroke-width=".9"/><rect x="979.5" y="185.5" width="6" height="5.5" fill="#fff" stroke="#222" stroke-width="1.2"/><path d="M979.5 217.5h6l-3 4 3 4h-6l3-4z" fill="#d8a020" stroke="#222" stroke-width=".8"/><rect x="979" y="273.5" width="5" height="5" fill="none" stroke="#333" stroke-width=".8"/><rect x="981" y="276.5" width="5" height="5.5" fill="#fff" stroke="#333" stroke-width=".8"/><rect x="980" y="301.5" width="5" height="5.5" fill="#666"/><rect x="979.5" y="344" width="6" height="7" fill="#fff" stroke="#444" stroke-width=".8"/><path d="M980 344.5l5 6M985 344.5l-5 6" stroke="#444" stroke-width=".6"/><circle cx="982.5" cy="391.7" r="3.4" fill="#fff" stroke="#333" stroke-width=".9"/><text x="0" y="0" transform="translate(979.8 91.5) rotate(90)" font-size="6.5" fill="#3a3a3a" font-family="Liberation Sans" letter-spacing="-.2">管理器</text><text x="0" y="0" transform="translate(979.8 123) rotate(90)" font-size="6.5" fill="#3a3a3a" font-family="Liberation Sans" letter-spacing="-.2">对象</text><text x="0" y="0" transform="translate(979.8 166) rotate(90)" font-size="6.5" fill="#3a3a3a" font-family="Liberation Sans" letter-spacing="-.2">造形</text><text x="0" y="0" transform="translate(979.8 195) rotate(90)" font-size="6.5" fill="#3a3a3a" font-family="Liberation Sans" letter-spacing="-.2">立体化</text><text x="0" y="0" transform="translate(979.8 229) rotate(90)" font-size="6.5" fill="#3a3a3a" font-family="Liberation Sans" letter-spacing="-.2">位图颜色遮罩</text><text x="0" y="0" transform="translate(979.8 285) rotate(90)" font-size="6.5" fill="#3a3a3a" font-family="Liberation Sans" letter-spacing="-.2">造形</text><text x="0" y="0" transform="translate(979.8 308.5) rotate(90)" font-size="6.5" fill="#3a3a3a" font-family="Liberation Sans" letter-spacing="-.2">对象属性</text><text x="0" y="0" transform="translate(979.8 353) rotate(90)" font-size="6.5" fill="#3a3a3a" font-family="Liberation Sans" letter-spacing="-.2">符号管理器</text><text x="0" y="0" transform="translate(979.8 399) rotate(90)" font-size="6.5" fill="#3a3a3a" font-family="Liberation Sans" letter-spacing="-.2">插图</text></svg>
<div style="left:989px;top:66px;width:11px;height:350px;background:#f0f0f0;border-left:1px solid #d8d8d8"></div>
<div style="left:990px;top:72px;width:9px;height:9px;background:#f8f8f8;border:1px solid #ccc;border-radius:50%"></div>
<div style="left:993px;top:75px;width:3px;height:3px;background:#111;border-radius:50%"></div>
<div style="left:993px;top:85px;width:3px;height:1px;background:#777"></div>
<svg style="position:absolute;left:990px;top:90px" width="10" height="9"><rect x=".5" y=".5" width="8.5" height="8" fill="#fff" stroke="#333"/><path d="M1 1l8 7M9 1l-8 7" stroke="#333" stroke-width=".9"/></svg>
<div style="left:990px;top:99px;width:9px;height:8.899999999999995px;background:#1c1c1c"></div>
<div style="left:990px;top:107.6px;width:9px;height:8.90000000000001px;background:#2f2f2f"></div>
<div style="left:990px;top:116.2px;width:9px;height:8.899999999999995px;background:#444"></div>
<div style="left:990px;top:124.8px;width:9px;height:8.90000000000001px;background:#575757"></div>
<div style="left:990px;top:133.4px;width:9px;height:8.899999999999995px;background:#6b6b6b"></div>
<div style="left:990px;top:142px;width:9px;height:8.899999999999995px;background:#7f7f7f"></div>
<div style="left:990px;top:150.6px;width:9px;height:8.899999999999995px;background:#939393"></div>
<div style="left:990px;top:159.2px;width:9px;height:8.900000000000023px;background:#a8a8a8"></div>
<div style="left:990px;top:167.8px;width:9px;height:8.899999999999995px;background:#bcbcbc"></div>
<div style="left:990px;top:176.4px;width:9px;height:8.899999999999995px;background:#d2d2d2"></div>
<div style="left:990px;top:185px;width:9px;height:10.3px;background:#f8f8f8"></div>
<div style="left:990px;top:195px;width:9px;height:9.3px;background:#34188a"></div>
<div style="left:990px;top:204px;width:9px;height:9.3px;background:#1e8ce0"></div>
<div style="left:990px;top:213px;width:9px;height:9.3px;background:#0c8e3e"></div>
<div style="left:990px;top:222px;width:9px;height:9.3px;background:#f6e400"></div>
<div style="left:990px;top:231px;width:9px;height:9.3px;background:#ee3a12"></div>
<div style="left:990px;top:240px;width:9px;height:9.3px;background:#e0307a"></div>
<div style="left:990px;top:249px;width:9px;height:9.3px;background:#8a3c8c"></div>
<div style="left:990px;top:258px;width:9px;height:9.3px;background:#f08c12"></div>
<div style="left:990px;top:267px;width:9px;height:8.8px;background:#f2a6a6"></div>
<div style="left:990px;top:275.5px;width:9px;height:8.8px;background:#5a4a4a"></div>
<div style="left:990px;top:284px;width:9px;height:9.3px;background:#bcace6"></div>
<div style="left:990px;top:293px;width:9px;height:9.3px;background:#7464be"></div>
<div style="left:990px;top:302px;width:9px;height:9.3px;background:#4a66cc"></div>
<div style="left:990px;top:311px;width:9px;height:9.3px;background:#7452c4"></div>
<div style="left:990px;top:320px;width:9px;height:9.3px;background:#8674b6"></div>
<div style="left:990px;top:329px;width:9px;height:9.3px;background:#3c5088"></div>
<div style="left:990px;top:338px;width:9px;height:9.3px;background:#323a52"></div>
<div style="left:990px;top:347px;width:9px;height:8.3px;background:#5c6a8a"></div>
<div style="left:990px;top:355px;width:9px;height:9.3px;background:#1c72d0"></div>
<div style="left:990px;top:364px;width:9px;height:9.3px;background:#62b6ee"></div>
<div style="left:990px;top:373px;width:9px;height:9.3px;background:#8ea6be"></div>
<div style="left:990px;top:382px;width:9px;height:9.3px;background:#6e7e8e"></div>
<div style="left:990px;top:391px;width:9px;height:9.3px;background:#506676"></div>
<div style="left:990px;top:400px;width:9px;height:9.3px;background:#404a52"></div>
<div style="left:990px;top:409px;width:9px;height:9.3px;background:#4c5a62"></div>
<div style="left:990px;top:418px;width:9px;height:9.3px;background:#4c5a62"></div>
<div style="left:999px;top:99px;width:1px;height:320px;background:#d0d0d8"></div>
<div style="left:923px;top:414.2px;width:77px;height:17.6px;background:linear-gradient(90deg,#151515 90%,#1e1e1e);border-radius:0 0 2px 2px"></div>
<div style="left:868px;top:431.8px;width:132px;height:84px;background:#fff"></div>
<div style="left:30px;top:503px;width:421px;height:11px;background:linear-gradient(180deg,#e8e8e8,#f4f4f4);border-top:1px solid #d0d0d0"></div>
<div style="left:451px;top:503px;width:4px;height:11px;background:#ddd;border-left:1px solid #bbb;border-right:1px solid #ccc"></div>
<div style="left:455px;top:503px;width:305px;height:11px;background:#ececec;border-top:1px solid #d8d8d8"></div>
<div style="left:488px;top:504px;width:270px;height:9px;background:linear-gradient(180deg,#e8e8e8,#cfcfcf);border:1px solid #c0c0c0;border-radius:1px 0 0 1px"></div>
<div style="left:458px;top:506px;width:0;height:0;border-top:3px solid transparent;border-bottom:3px solid transparent;border-right:3px solid #222"></div>
<div style="left:638px;top:506px;width:5px;height:4px;border-left:1px solid #777;border-right:1px solid #777"></div><div style="left:640px;top:506px;width:1px;height:4px;background:#777"></div>
<svg style="position:absolute;left:0;top:0" width="1000" height="542" viewBox="0 0 1000 542"><path d="M33 505.5h3.5l1.5 1.5v5h-5z" fill="#fff" stroke="#333" stroke-width=".8"/><path d="M34.5 509.5h2M35.5 508.5v2" stroke="#333" stroke-width=".7"/><path d="M44.5 506v5" stroke="#999"/><path d="M49 506v5l-3-2.5z" fill="#999"/><path d="M58 506v5l-3-2.5z" fill="#999"/><path d="M105 506v5l3-2.5z" fill="#999"/><path d="M115 506v5l3-2.5z" fill="#999"/><path d="M119.5 506v5" stroke="#999"/><path d="M127 505.5h3.5l1.5 1.5v5h-5z" fill="#fff" stroke="#333" stroke-width=".8"/><path d="M128.5 509.5h2" stroke="#333" stroke-width=".7"/><defs><linearGradient id="pg" x1="0" y1="0" x2="0" y2="1"><stop offset="0" stop-color="#c4e4fa"/><stop offset="1" stop-color="#8cc8ee"/></linearGradient></defs><path d="M136 504h31q2 0 3 2l1 5q.5 2.5-2 2.5h-33z" fill="url(#pg)" stroke="#9ccbe8" stroke-width=".6"/></svg>
<div class="t" style="left:74px;top:503.5px;font-size:9px;color:#333;-webkit-text-stroke:0;letter-spacing:.3px">1 / 1</div>
<div class="t" style="left:145px;top:503.5px;font-size:8.5px;color:#1a2a40;-webkit-text-stroke:0.1px currentColor">页 1</div>
<div style="left:0;top:514px;width:1000px;height:23px;background:linear-gradient(180deg,#f6f6f6,#eeeeee)"></div>
<svg style="position:absolute;left:0;top:0" width="1000" height="542"><path d="M749 502.5H1000V516.5H766Q761 516 760 513L749 502.5z" fill="#fff"/></svg>
<div class="t" style="left:212px;top:515.2px;font-size:7.6px;color:#1a1a1a;letter-spacing:-0.25px">选定 2 对象 于 图层 1</div>
<div class="t" style="left:3px;top:526px;font-size:7.6px;color:#1a1a1a;letter-spacing:-0.17px">( 58.526, 114.501 ) 单击对象两次可旋转/倾斜；双击工具可选择所有对象；按住 Shift 键单击可选择多个对象；按住 Alt 键单击...</div>
<svg style="position:absolute;left:0;top:0" width="1000" height="542" viewBox="0 0 1000 542"><path d="M898 517.5l3.5 3.5-3.5 3.5-3.5-3.5z" fill="#e8c8a0" stroke="#805a3a" stroke-width=".9"/><rect x="904.5" y="517.5" width="9" height="7.5" fill="#fff" stroke="#333" stroke-width=".8"/><path d="M905 518l8 7M913 518l-8 7" stroke="#333" stroke-width=".8"/><path d="M896 534.5v-4l1.5-2.5 1.5 2.5v4z" fill="#eee" stroke="#555" stroke-width=".7"/><rect x="904" y="527" width="9" height="8" fill="#1e1e1e"/></svg>
<div class="t" style="left:915.5px;top:516px;font-size:8px;color:#222">无</div>
<div class="t" style="left:915.5px;top:526px;font-size:8px;color:#222">黑</div>
<div class="t" style="left:928px;top:526.5px;font-size:7.5px;color:#222">.200 毫米</div>
<div style="left:0;top:536px;width:1000px;height:6px;background:linear-gradient(90deg,#2b4a58 0,#2b4a58 36px,#30606a 218px,#3f6e78 300px,#22507e 345px,#21497a 600px,#2c4038 640px,#22508a 690px,#4a6a62 750px,#22508a 780px,#22508a 870px,#2e4a40 910px,#22508a 960px,#3a5a82 1000px);border-top:1px solid #e8eef4"></div>
<div style="left:10px;top:537px;width:15px;height:5px;background:radial-gradient(ellipse at 50% 20%,#c8dcec,#6a8aa0 70%,rgba(40,70,80,0) 100%);border-radius:7px 7px 0 0"></div>
<div style="left:37px;top:537px;width:35px;height:5px;background:linear-gradient(180deg,#c8d4d0,#a8bab2);border:1px solid rgba(255,255,255,.35);border-bottom:none;border-radius:2px 2px 0 0"></div>
<div style="left:81px;top:537px;width:29px;height:5px;background:linear-gradient(180deg,#4a90a8,#2a6a84);border:1px solid rgba(255,255,255,.35);border-bottom:none;border-radius:2px 2px 0 0"></div>
<div style="left:110px;top:537px;width:36px;height:5px;background:linear-gradient(90deg,#b0c0b8,#a4bca0 50%,#b0c0b8);border:1px solid rgba(255,255,255,.35);border-bottom:none;border-radius:2px 2px 0 0"></div>
<div style="left:147px;top:537px;width:35px;height:5px;background:linear-gradient(90deg,#c0c8c4,#c8d0a8 50%,#c0c8c0);border:1px solid rgba(255,255,255,.35);border-bottom:none;border-radius:2px 2px 0 0"></div>
<div style="left:183px;top:537px;width:36px;height:5px;background:linear-gradient(90deg,#b8c8c0,#b0c8a0 50%,#b8c8c0);border:1px solid rgba(255,255,255,.35);border-bottom:none;border-radius:2px 2px 0 0"></div>
</body></html>
